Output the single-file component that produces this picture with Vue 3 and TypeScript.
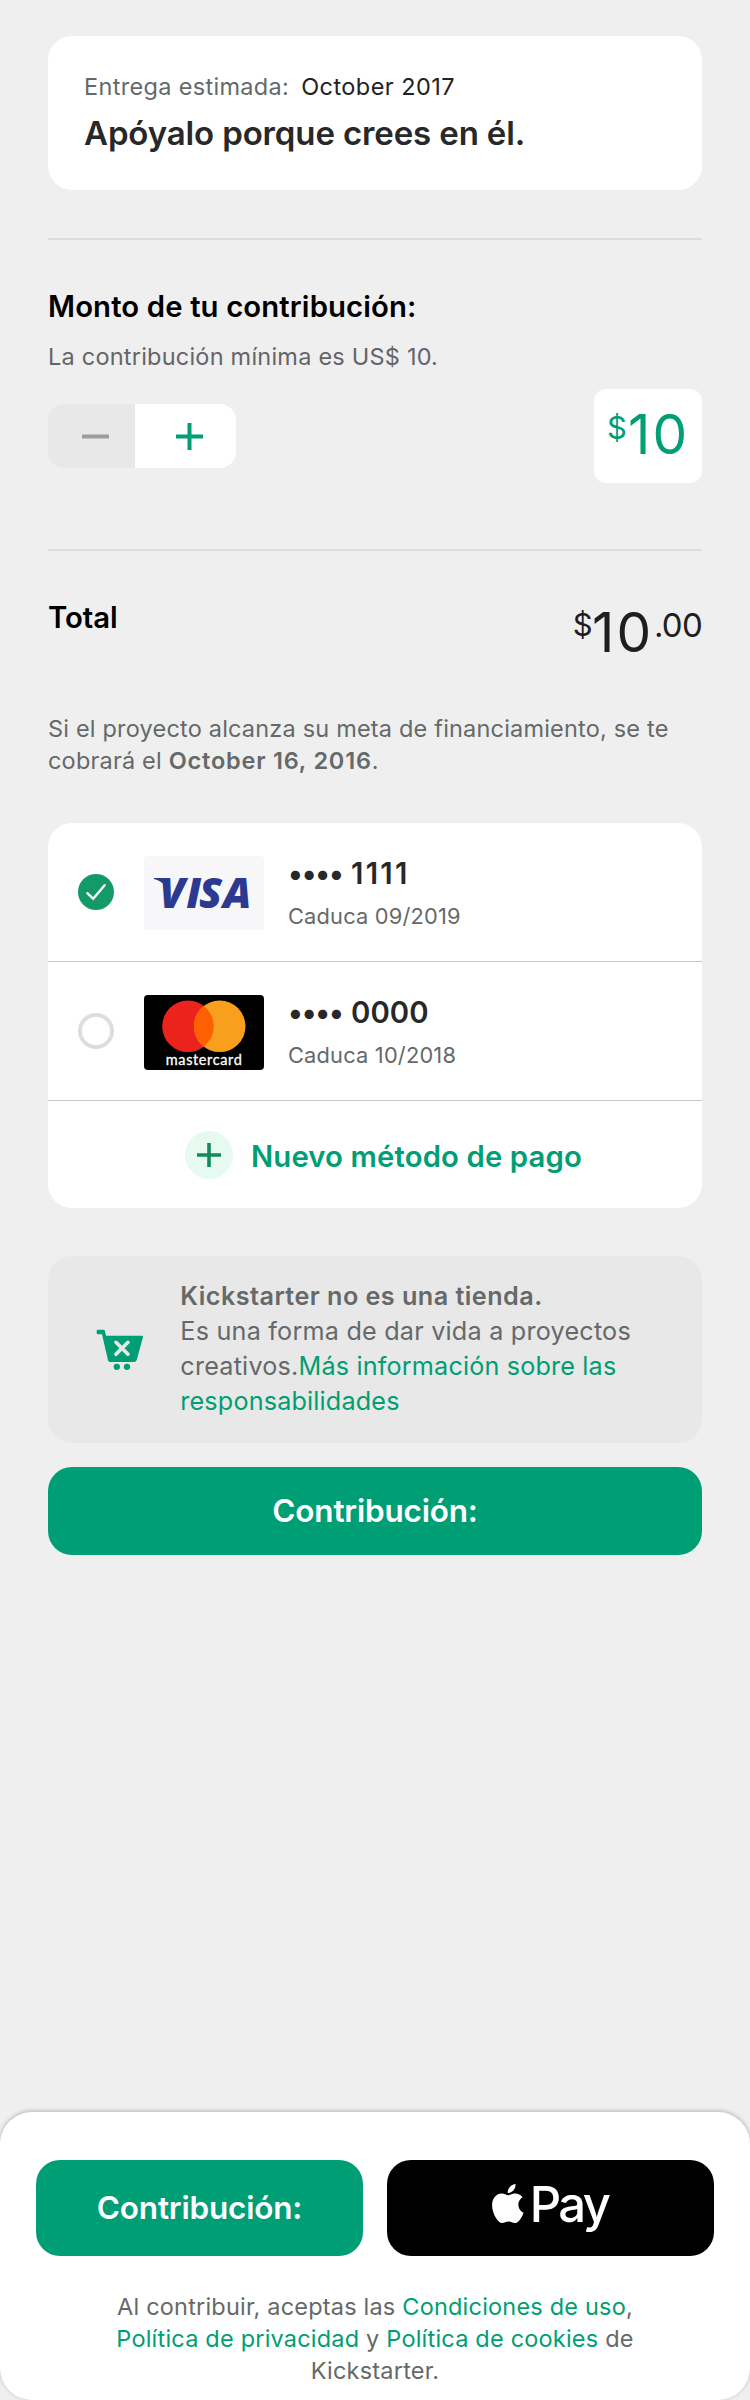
<script setup lang="ts">
import { ref } from 'vue'

interface Card {
  id: string
  brand: 'visa' | 'mastercard'
  lastFour: string
  expires: string
}

const cards: Card[] = [
  { id: 'a', brand: 'visa', lastFour: '1111', expires: '09/2019' },
  { id: 'b', brand: 'mastercard', lastFour: '0000', expires: '10/2018' },
]
const selected = ref('a')
const minimum = 10
const amount = ref(10)

function change(step: number) {
  amount.value = Math.max(minimum, amount.value + step)
}
</script>

<template>
  <main class="page">
    <div class="content">
      <section class="reward">
        <p class="delivery"><span>Entrega estimada:</span><span class="date">October 2017</span></p>
        <h1>Apóyalo porque crees en él.</h1>
      </section>

      <hr />

      <section class="pledge">
        <h2>Monto de tu contribución:</h2>
        <p class="hint">La contribución mínima es US$ 10.</p>
        <div class="controls">
          <div class="stepper">
            <button class="minus" aria-label="-" @click="change(-1)">
              <svg width="27" height="27" viewBox="0 0 27 27"><rect y="11.5" width="27" height="4" rx="0.5" fill="#9a9f9d" /></svg>
            </button>
            <button class="plus" aria-label="+" @click="change(1)">
              <svg width="27" height="27" viewBox="0 0 27 27" fill="#009e74"><rect y="11.5" width="27" height="4" rx="0.5" /><rect x="11.5" width="4" height="27" rx="0.5" /></svg>
            </button>
          </div>
          <div class="amount"><span class="cur">$</span><span class="num">{{ amount }}</span></div>
        </div>
      </section>

      <hr class="second" />

      <section class="total">
        <h2>Total</h2>
        <div class="sum"><span class="cur">$</span><span class="num">{{ amount }}</span><span class="cents">.00</span></div>
      </section>
      <p class="notice">Si el proyecto alcanza su meta de financiamiento, se te<br />cobrará el <b>October 16, 2016</b>.</p>

      <section class="methods">
        <div v-for="card in cards" :key="card.id" class="method" @click="selected = card.id">
          <svg v-if="selected === card.id" class="mark" viewBox="0 0 36 36">
            <circle cx="18" cy="18" r="18" fill="#149a68" />
            <path d="M9.4 19.2 15.2 24.8 26.6 11.2" fill="none" stroke="#fff" stroke-width="2.4" stroke-linecap="round" />
          </svg>
          <span v-else class="mark radio"></span>

          <svg v-if="card.brand === 'visa'" class="logo" width="120" height="74" viewBox="0 0 120 74">
            <rect width="120" height="74" rx="4" fill="#f7f7fa" />
            <path d="M10 22H23L20.5 30C18.5 26 14.5 24 10 23Z" fill="#2b3990" />
            <text class="visa" x="15.2 42.2 55 79" y="52">VISA</text>
          </svg>
          <svg v-else class="logo master" width="120" height="75" viewBox="0 0 120 75">
            <rect width="120" height="75" rx="4" />
            <circle cx="44" cy="31.3" r="25.8" fill="#eb231d" />
            <circle cx="75.7" cy="31.3" r="25.8" fill="#f8a01d" />
            <path d="M59.85 10.95a25.8 25.8 0 0 1 0 40.7a25.8 25.8 0 0 1 0-40.7Z" fill="#ff5f00" />
            <text class="mc" x="21.8" y="70" textLength="76">mastercard</text>
          </svg>

          <div class="details">
            <p class="digits"><span class="dots">••••</span><span :class="{ ones: card.lastFour === '1111' }">{{ card.lastFour }}</span></p>
            <p class="expiry">Caduca {{ card.expires }}</p>
          </div>
        </div>
        <div class="add">
          <svg width="48" height="48" viewBox="0 0 48 48">
            <circle cx="24" cy="24" r="24" fill="#e6faf1" />
            <path d="M12 24H36M24 12V36" stroke="#128a60" stroke-width="3.6" />
          </svg>
          <span>Nuevo método de pago</span>
        </div>
      </section>

      <section class="info">
        <svg width="47.3" height="41.3" viewBox="108 86 142 124" fill="#009e74">
          <path d="M114 88H130Q134 88 135 92L138 106H245Q250 106 249 111L230 180Q228 185 223 185H150Q145 185 144 180L126 102H114Q110 102 110 98V92Q110 88 114 88Z" />
          <circle cx="170.5" cy="199.5" r="9.5" />
          <circle cx="201" cy="199.5" r="9.5" />
          <path d="M168 126 204 162M204 126 168 162" stroke="#e8e8e8" stroke-width="11" stroke-linecap="round" />
        </svg>
        <p><b>Kickstarter no es una tienda.</b><br />Es una forma de dar vida a proyectos<br />creativos.<a>Más información sobre las<br />responsabilidades</a></p>
      </section>

      <button class="cta main">Contribución:</button>
    </div>

    <footer>
      <div class="actions">
        <button class="cta">Contribución:</button>
        <button class="cta apple" aria-label="Apple Pay">
          <svg width="140" height="72" viewBox="0 -8 140 72">
            <path transform="translate(-1.5 4) scale(1.61 1.63)" d="M12.152 6.896c-.948 0-2.415-1.078-3.96-1.04-2.04.027-3.91 1.183-4.961 3.014-2.117 3.675-.546 9.103 1.519 12.09 1.013 1.454 2.208 3.09 3.792 3.039 1.52-.065 2.09-.987 3.935-.987 1.831 0 2.35.987 3.96.948 1.637-.026 2.676-1.48 3.676-2.948 1.156-1.688 1.636-3.325 1.662-3.415-.039-.013-3.182-1.221-3.22-4.857-.026-3.04 2.48-4.494 2.597-4.559-1.429-2.09-3.623-2.324-4.39-2.376-2-.156-3.675 1.09-4.61 1.09zM15.53 3.83c.843-1.012 1.4-2.427 1.245-3.83-1.207.052-2.662.805-3.532 1.818-.78.896-1.454 2.338-1.273 3.714 1.338.104 2.715-.688 3.559-1.701" />
            <text class="pay" x="39.7" y="42.3">Pay</text>
          </svg>
        </button>
      </div>
      <p class="legal">Al contribuir, aceptas las <a>Condiciones de uso</a>,<br /><a>Política de privacidad</a> y <a>Política de cookies</a> de<br />Kickstarter.</p>
    </footer>
  </main>
</template>

<style>
body {
  background: #efefef;
}
</style>

<style scoped>
.page {
  box-sizing: border-box;
  display: flex;
  flex-direction: column;
  width: 750px;
  height: 2400px;
  padding-top: 36px;
  background: #efefef;
  font-family: Inter, "Liberation Sans", sans-serif;
  color: #656969;
  overflow: hidden;
}
p, h1, h2 {
  margin: 0;
  font-weight: 400;
  white-space: nowrap;
}
button {
  border: 0;
  padding: 0;
  font-family: inherit;
}
a, .plus {
  color: #009e74;
}
.content {
  padding: 0 48px;
}
.reward {
  height: 154px;
  box-sizing: border-box;
  padding: 35px 36px 0;
  border-radius: 24px;
  background: #fff;
}
.delivery {
  display: flex;
  gap: 12px;
  font-size: 23.5px;
  line-height: 31px;
  letter-spacing: 0.32px;
}
.date {
  color: #222;
  letter-spacing: 0.44px;
}
h1 {
  margin-top: 11px;
  font-size: 33px;
  font-weight: 600;
  line-height: 40px;
  letter-spacing: -0.13px;
  color: #282828;
}
hr {
  height: 2px;
  margin: 48px 0 49px;
  border: 0;
  background: #dcdcdc;
}
hr.second {
  margin: 66px 0 48px;
}
h2 {
  font-size: 29.3px;
  font-weight: 600;
  line-height: 35px;
  letter-spacing: 0.12px;
  color: #000;
}
.hint {
  margin-top: 17px;
  font-size: 23.5px;
  line-height: 31px;
  letter-spacing: 0.22px;
  color: #656469;
}
.controls {
  display: flex;
  align-items: center;
  justify-content: space-between;
  margin-top: 17px;
}
.stepper {
  display: flex;
  height: 64px;
  border-radius: 16px;
  overflow: hidden;
}
.stepper button {
  display: flex;
  align-items: center;
  justify-content: center;
  padding-left: 7px;
  box-sizing: border-box;
}
.stepper .minus {
  width: 87px;
  background: #e8e8e8;
}
.stepper .plus {
  width: 101px;
  background: #fff;
}
.amount {
  display: flex;
  width: 108px;
  height: 94px;
  box-sizing: border-box;
  padding: 12px 0 0 13px;
  border-radius: 12px;
  background: #fff;
  color: #009e74;
}
.cur {
  margin-top: 8px;
  font-size: 31px;
  line-height: 37px;
}
.num {
  margin-left: 1px;
  font-size: 55px;
  line-height: 66px;
  letter-spacing: 2.13px;
}
.total {
  display: flex;
  justify-content: space-between;
}
.total h2 {
  margin-top: 1px;
  letter-spacing: -0.05px;
}
.sum {
  display: flex;
  color: #1e1e1e;
}
.sum .cur {
  margin-top: 7px;
}
.sum .num {
  margin-left: -0.5px;
}
.cents {
  margin: 6px 0 0 0.5px;
  font-size: 33px;
  line-height: 40px;
  letter-spacing: -0.74px;
}
.notice {
  margin-top: 48px;
  font-size: 23.5px;
  line-height: 32px;
  letter-spacing: 0.19px;
}
.notice b {
  font-weight: 600;
  letter-spacing: 0.8px;
}
.methods {
  height: 385px;
  margin-top: 46px;
  border-radius: 24px;
  background: #fff;
}
.method {
  display: flex;
  height: 138px;
  padding-left: 30px;
  border-bottom: 1px solid #c6c6c6;
}
.mark {
  box-sizing: border-box;
  width: 36px;
  height: 36px;
  margin-top: 51px;
}
.radio {
  border: 4px solid #dcdedd;
  border-radius: 50%;
}
.logo {
  margin: 33px 24px 0 30px;
}
.logo.master {
  margin-top: 32.5px;
}
.visa {
  font: italic 800 42px "Open Sans", "Noto Sans", sans-serif;
  fill: #2b3990;
}
.mc {
  font: 400 14.5px Lato, sans-serif;
  fill: #fff;
  stroke: #fff;
  stroke-width: 0.3px;
}
.details {
  margin-top: 33px;
}
.digits {
  display: flex;
  gap: 8.3px;
  font-size: 29.3px;
  font-weight: 600;
  line-height: 35px;
  letter-spacing: 0.11px;
  color: #282828;
}
.dots {
  letter-spacing: -1.08px;
}
.ones {
  letter-spacing: 2.28px;
}
.expiry {
  margin-top: 12px;
  font-size: 21.8px;
  line-height: 26px;
  letter-spacing: 0.2px;
}
.add {
  display: flex;
  gap: 18px;
  padding: 30px 0 0 137px;
  font-size: 29.3px;
  font-weight: 600;
  line-height: 35px;
  letter-spacing: 0.12px;
  color: #009e74;
}
.add span {
  margin-top: 8px;
}
.info {
  display: flex;
  gap: 37px;
  height: 187px;
  box-sizing: border-box;
  margin-top: 48px;
  padding: 23px 0 0 48px;
  border-radius: 24px;
  background: #e8e8e8;
  font-size: 25.2px;
  line-height: 35px;
  letter-spacing: 0.21px;
}
.info svg {
  margin-top: 49.7px;
}
.info b {
  font-weight: 600;
  letter-spacing: 0.46px;
}
.info a {
  letter-spacing: 0.16px;
}
.cta {
  height: 96px;
  padding-bottom: 1px;
  border-radius: 24px;
  background: #009e74;
  color: #fff;
  font-size: 31.5px;
  font-weight: 600;
  line-height: 39px;
  letter-spacing: -0.19px;
}
.cta.main {
  width: 100%;
  height: 88px;
  margin-top: 24px;
}
footer {
  height: 288px;
  margin-top: auto;
  box-sizing: border-box;
  padding: 48px 36px 0;
  border-radius: 32px;
  background: #fff;
  box-shadow: 0 -1px 4px rgba(0, 0, 0, 0.25);
}
.actions {
  display: grid;
  grid-template-columns: 1fr 1fr;
  gap: 24px;
}
.apple {
  display: flex;
  padding: 12px 0 0 103px;
  background: #000;
  fill: #fff;
}
.pay {
  font: 500 49px Inter, sans-serif;
  letter-spacing: -2.6px;
}
.legal {
  margin-top: 35px;
  text-align: center;
  font-size: 23.5px;
  line-height: 32px;
  letter-spacing: 0.2px;
}
</style>
